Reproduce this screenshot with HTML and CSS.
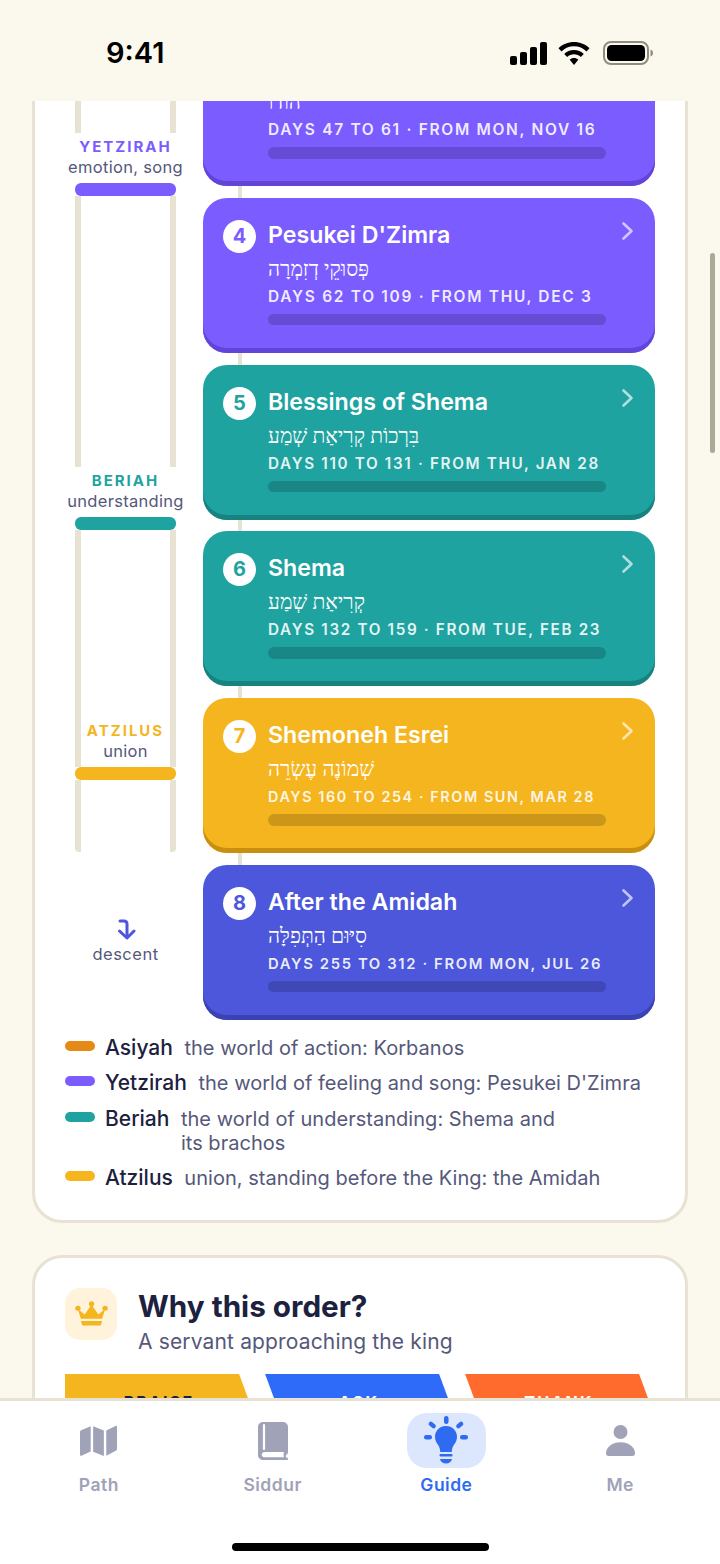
FILE: index.html
```html
<!DOCTYPE html>
<html lang="en">
<head>
  <meta charset="UTF-8">
  <meta name="viewport" content="width=device-width, initial-scale=1.0">
  <title>Guide</title>
  <link rel="stylesheet" href="styles.css">
</head>
<body>
  <div class="phone">
    <div class="status-bar">
      <span class="time">9:41</span>
      <div class="status-icons">
        <svg width="37" height="23" viewBox="0 0 37 23"><rect x="0" y="14" width="7" height="9" rx="2"/><rect x="10" y="10" width="7" height="13" rx="2"/><rect x="20" y="5" width="7" height="18" rx="2"/><rect x="30" y="0" width="7" height="23" rx="2"/></svg>
        <svg width="32" height="23" viewBox="0 0 32 23"><path d="M16 0c6 0 11.500 2.300 15.500 6.200l-3 3.200C25.200 6.200 20.800 4.300 16 4.300S6.800 6.200 3.500 9.400l-3-3.200C4.500 2.300 10 0 16 0z"/><path d="M16 8c3.800 0 7.300 1.500 9.800 3.900l-3 3.200C21 13.300 18.600 12.300 16 12.300s-5 1-6.800 2.800l-3-3.200C8.700 9.500 12.200 8 16 8z"/><path d="M16 16c1.700 0 3.200.6 4.300 1.700L16 23l-4.300-5.300c1.100-1.100 2.600-1.700 4.300-1.700z"/></svg>
        <svg class="battery" width="50" height="24" viewBox="0 0 50 24"><rect x="1" y="1" width="44" height="22" rx="7" fill="none" stroke="#8f8c80" stroke-width="2"/><rect x="4" y="4" width="38" height="16" rx="4.500"/><path d="M47.500 8.500c1.500.5 2.500 1.800 2.500 3.500s-1 3-2.500 3.500z" fill="#8f8c80"/></svg>
      </div>
    </div>

    <main class="scroll-area">
      <section class="panel timeline-panel">
        <div class="timeline">
          <div class="worlds">
            <div class="rails rails-a"></div>
            <div class="world-label">
              <strong class="text-purple">YETZIRAH</strong>
              <span>emotion, song</span>
            </div>
            <div class="world-bar bg-purple"></div>
            <div class="rails rails-b"></div>
            <div class="world-label">
              <strong class="text-teal">BERIAH</strong>
              <span>understanding</span>
            </div>
            <div class="world-bar bg-teal"></div>
            <div class="rails rails-c">
              <div class="world-label">
                <strong class="text-yellow">ATZILUS</strong>
                <span>union</span>
              </div>
            </div>
            <div class="world-bar bg-yellow"></div>
            <div class="rails rails-d"></div>
            <div class="descent">
              <svg width="20" height="21" viewBox="0 0 20 21" fill="none" stroke="#4c57db" stroke-width="3" stroke-linecap="round" stroke-linejoin="round"><path d="M4 2h4c2 0 3 1.200 3 3v13"/><path d="M3.500 12l7.500 7 7-7"/></svg>
              <span>descent</span>
            </div>
          </div>

          <div class="steps">
            <article class="step purple">
              <span class="step-num"></span>
              <div class="step-body cut-off">
                <p class="hebrew" dir="rtl">הודו</p>
                <p class="days">DAYS 47 TO 61 · FROM MON, NOV 16</p>
                <div class="progress"></div>
              </div>
            </article>
            <div class="connector"></div>
            <article class="step purple">
              <span class="step-num">4</span>
              <div class="step-body">
                <h3>Pesukei D'Zimra</h3>
                <p class="hebrew" dir="rtl">פְּסוּקֵי דְזִמְרָה</p>
                <p class="days">DAYS 62 TO 109 · FROM THU, DEC 3</p>
                <div class="progress"></div>
              </div>
              <svg class="chevron" width="14" height="20" viewBox="0 0 14 20"><path d="M2.500 2.500l8 7.500-8 7.500"/></svg>
            </article>
            <div class="connector"></div>
            <article class="step teal">
              <span class="step-num">5</span>
              <div class="step-body">
                <h3>Blessings of Shema</h3>
                <p class="hebrew" dir="rtl">בִּרְכוֹת קְרִיאַת שְׁמַע</p>
                <p class="days fit-98">DAYS 110 TO 131 · FROM THU, JAN 28</p>
                <div class="progress"></div>
              </div>
              <svg class="chevron" width="14" height="20" viewBox="0 0 14 20"><path d="M2.500 2.500l8 7.500-8 7.500"/></svg>
            </article>
            <div class="connector"></div>
            <article class="step teal">
              <span class="step-num">6</span>
              <div class="step-body">
                <h3>Shema</h3>
                <p class="hebrew" dir="rtl">קְרִיאַת שְׁמַע</p>
                <p class="days fit-98">DAYS 132 TO 159 · FROM TUE, FEB 23</p>
                <div class="progress"></div>
              </div>
              <svg class="chevron" width="14" height="20" viewBox="0 0 14 20"><path d="M2.500 2.500l8 7.500-8 7.500"/></svg>
            </article>
            <div class="connector"></div>
            <article class="step yellow">
              <span class="step-num">7</span>
              <div class="step-body">
                <h3>Shemoneh Esrei</h3>
                <p class="hebrew" dir="rtl">שְׁמוֹנֶה עֶשְׂרֵה</p>
                <p class="days fit-93">DAYS 160 TO 254 · FROM SUN, MAR 28</p>
                <div class="progress"></div>
              </div>
              <svg class="chevron" width="14" height="20" viewBox="0 0 14 20"><path d="M2.500 2.500l8 7.500-8 7.500"/></svg>
            </article>
            <div class="connector"></div>
            <article class="step indigo">
              <span class="step-num">8</span>
              <div class="step-body">
                <h3>After the Amidah</h3>
                <p class="hebrew" dir="rtl">סִיּוּם הַתְּפִלָּה</p>
                <p class="days fit-96">DAYS 255 TO 312 · FROM MON, JUL 26</p>
                <div class="progress"></div>
              </div>
              <svg class="chevron" width="14" height="20" viewBox="0 0 14 20"><path d="M2.500 2.500l8 7.500-8 7.500"/></svg>
            </article>
          </div>
        </div>

        <ul class="legend">
          <li><i class="swatch bg-orange"></i><b>Asiyah</b><span>the world of action: Korbanos</span></li>
          <li><i class="swatch bg-purple"></i><b>Yetzirah</b><span>the world of feeling and song: Pesukei D'Zimra</span></li>
          <li><i class="swatch bg-teal"></i><b>Beriah</b><span class="narrow">the world of understanding: Shema and its brachos</span></li>
          <li><i class="swatch bg-yellow"></i><b>Atzilus</b><span>union, standing before the King: the Amidah</span></li>
        </ul>
      </section>

      <section class="panel why-panel">
        <div class="why-head">
          <div class="why-icon">
            <svg width="33" height="25" viewBox="0 0 34 28" preserveAspectRatio="none" fill="#f5b51f"><circle cx="3" cy="8" r="2.800"/><circle cx="17" cy="3" r="2.800"/><circle cx="31" cy="8" r="2.800"/><path d="M3 9l7 6 7-11 7 11 7-6-3 11H6z"/><path d="M6 22.500h22l-1.500 5h-19z"/></svg>
          </div>
          <div>
            <h2>Why this order?</h2>
            <p>A servant approaching the king</p>
          </div>
        </div>
        <div class="order">
          <div class="order-step first">PRAISE</div>
          <div class="order-step ask">ASK</div>
          <div class="order-step thank">THANK</div>
        </div>
      </section>
    </main>

    <div class="scroll-thumb"></div>

    <nav class="tabs">
      <div class="tab">
        <div class="tab-icon">
          <svg width="37" height="34" viewBox="0 0 38 36" preserveAspectRatio="none" fill="#a0a2b8"><path d="M0 8.500c0-.8.500-1.500 1.200-1.800L11 2.500V29l-9.500 4.500C.7 33.800 0 33.300 0 32.500z"/><path d="M13.500 2.500L24.500 7v27l-11-4.500z"/><path d="M27 7l9.500-5c.8-.4 1.500.2 1.500 1v23.500c0 .8-.4 1.500-1.200 1.800L27 33.500z"/></svg>
        </div>
        <span>Path</span>
      </div>
      <div class="tab">
        <div class="tab-icon">
          <svg width="30" height="38" viewBox="0 0 30 38"><path d="M5 0h20c2.800 0 5 2.200 5 5v25c0 1.500-.8 2.400-1.800 2.800-.6.800-.6 1.800 0 2.500.8.300 1.800.8 1.800 1.500v.2c0 .6-.4 1-1 1H5c-2.800 0-5-2.200-5-5V5c0-2.800 2.200-5 5-5z" fill="#a0a2b8"/><path d="M6 3v24" stroke="#fff" stroke-width="2.200" stroke-linecap="round"/><path d="M6.500 30h19.500c-.6 1.700-.6 3.500 0 5.300H6.500C5 35.300 3.700 34.200 3.700 32.700S5 30 6.500 30z" fill="#fff"/></svg>
        </div>
        <span>Siddur</span>
      </div>
      <div class="tab active">
        <div class="tab-icon">
          <svg width="44" height="49" viewBox="0 0 44 49" fill="#2e6bf0"><rect x="20" y="0" width="4.500" height="8" rx="2.250"/><rect x="6" y="5" width="4.500" height="8" rx="2.250" transform="rotate(-50 8.250 9)"/><rect x="33.500" y="5" width="4.500" height="8" rx="2.250" transform="rotate(50 35.750 9)"/><rect x="0" y="19" width="8" height="4.500" rx="2.250"/><rect x="36" y="19" width="8" height="4.500" rx="2.250"/><path d="M22 10c6.200 0 11 4.700 11 10.800 0 3.400-1.300 5.600-3 8-1.300 1.800-2 4-2.300 7.200H16.300c-.3-3.200-1-5.400-2.300-7.200-1.700-2.400-3-4.600-3-8C11 14.700 15.800 10 22 10z"/><rect x="15.500" y="38" width="13" height="2.500" rx="1"/><path d="M16 43h12c-.5 2.800-3 4.500-6 4.500s-5.500-1.700-6-4.500z"/></svg>
        </div>
        <span>Guide</span>
      </div>
      <div class="tab">
        <div class="tab-icon">
          <svg width="29" height="31" viewBox="0 0 29 31" fill="#a0a2b8"><circle cx="14.500" cy="7" r="7"/><path d="M14.500 17.300C6.500 17.300 0 22 0 28.500 0 30 1 31 2.500 31h24c1.500 0 2.500-1 2.500-2.500 0-6.500-6.500-11.200-14.500-11.200z"/></svg>
        </div>
        <span>Me</span>
      </div>
      <div class="home-indicator"></div>
    </nav>
  </div>
</body>
</html>
```
FILE: styles.css
```css
* {
  box-sizing: border-box;
}

body {
  margin: 0;
  background-color: #fbf8ee;
  font-family: 'Inter', sans-serif;
  color: #1c2140;
}

h2, h3, p, ul {
  margin: 0;
  padding: 0;
}

.phone {
  position: relative;
  width: 720px;
  height: 1564px;
  display: flex;
  flex-direction: column;
  overflow: hidden;
}

/* status bar */
.status-bar {
  height: 101px;
  flex: none;
  display: flex;
  justify-content: space-between;
  padding: 36px 67px 0 106px;
}

.time {
  font-size: 29px;
  line-height: 34px;
  font-weight: 600;
  color: #000;
}

.status-icons {
  display: flex;
  gap: 11px;
  height: 24px;
  margin-top: 5px;
  align-items: center;
}

.battery {
  margin-left: 2px;
}

/* scrolling content */
.scroll-area {
  flex: 1;
  min-height: 0;
  overflow: hidden;
  padding: 0 32px;
}

.panel {
  background-color: #fff;
  border: 3px solid #e8e2d2;
  border-radius: 30px;
}

.timeline-panel {
  margin-top: -100px;
  padding: 27px 30px 30px;
}

.timeline {
  display: flex;
  gap: 17px;
}

.worlds {
  width: 121px;
  flex: none;
  display: flex;
  flex-direction: column;
  align-items: center;
}

.rails {
  width: 101px;
  flex: none;
  border-left: 6px solid #e8e2d2;
  border-right: 6px solid #e8e2d2;
}

.rails-a { height: 102px; }
.rails-b { height: 271px; }
.rails-d { height: 72px; border-radius: 0 0 4px 4px; }

/* this one runs on beside its label, the label fits between the rails */
.rails-c {
  height: 237px;
  display: flex;
  flex-direction: column;
  justify-content: flex-end;
}

.world-label {
  height: 50px;
  flex: none;
  padding-top: 5px;
  display: flex;
  flex-direction: column;
  align-items: center;
  white-space: nowrap;
}

.world-label strong {
  font-size: 15px;
  line-height: 18px;
  font-weight: 700;
  letter-spacing: 2px;
}

.world-label span {
  font-size: 16.500px;
  line-height: 22px;
  letter-spacing: 0.300px;
  color: #55587a;
}

.world-bar {
  width: 101px;
  height: 13px;
  flex: none;
  border-radius: 6px;
}

.descent {
  margin-top: 67px;
  display: flex;
  flex-direction: column;
  align-items: center;
  gap: 3px;
  font-size: 16.500px;
  line-height: 22px;
  letter-spacing: 0.500px;
  color: #55587a;
}

.text-purple { color: #7b5cff; }
.text-teal { color: #1fa3a0; }
.text-yellow { color: #f5b51f; }

.bg-purple { background-color: #7b5cff; }
.bg-teal { background-color: #1fa3a0; }
.bg-yellow { background-color: #f5b51f; }
.bg-orange { background-color: #e68a17; }

/* step cards */
.steps {
  flex: 1;
  min-width: 0;
}

.connector {
  width: 4px;
  height: 11.800px;
  margin-left: 34.500px;
  background-color: #e8e2d2;
}

.step {
  height: 155px;
  padding: 18px 20px 0;
  border-radius: 24px;
  display: flex;
  color: #fff;
  box-shadow: inset 0 -5px 0 var(--edge);
  background-color: var(--fill);
}

.purple { --fill: #7b5cff; --edge: #6244d8; }
.teal { --fill: #1fa3a0; --edge: #178280; }
.yellow { --fill: #f5b51f; --edge: #c98f10; }
.indigo { --fill: #4c57db; --edge: #3a43b2; }

.step-num {
  width: 33px;
  height: 33px;
  margin-top: 4px;
  flex: none;
  border-radius: 50%;
  background-color: #fff;
  color: var(--fill);
  font-size: 20px;
  line-height: 33px;
  font-weight: 700;
  text-align: center;
}

.step-body {
  flex: 1;
  min-width: 0;
  margin: 0 15px 0 12px;
}

/* the top of this card is scrolled out of view */
.cut-off {
  padding-top: 37px;
  margin-right: 29px;
}

.step h3 {
  margin-top: 1px;
  font-size: 23.200px;
  line-height: 36px;
  font-weight: 600;
}

.hebrew {
  margin-top: 4px;
  font-family: 'Liberation Serif', serif;
  font-size: 21px;
  line-height: 24px;
  direction: ltr;
  unicode-bidi: plaintext;
  text-align: left;
}

.days {
  margin-top: 6px;
  font-size: 15.500px;
  line-height: 20px;
  font-weight: 600;
  letter-spacing: 1.690px;
  white-space: nowrap;
  color: rgba(255, 255, 255, 0.9);
}

/* long date lines shrink to stay inside the card */
.days.fit-98 {
  font-size: 15.250px;
  letter-spacing: 1.660px;
}

.days.fit-96 {
  font-size: 14.830px;
  letter-spacing: 1.620px;
}

.days.fit-93 {
  font-size: 14.400px;
  letter-spacing: 1.570px;
}

.progress {
  height: 11.500px;
  margin-top: 7px;
  border-radius: 6px;
  background-color: rgba(0, 0, 0, 0.17);
}

.chevron {
  flex: none;
  margin-top: 5px;
  fill: none;
  stroke: rgba(255, 255, 255, 0.65);
  stroke-width: 2.600;
  stroke-linecap: round;
  stroke-linejoin: round;
}

/* legend */
.legend {
  list-style: none;
  margin-top: 16px;
  display: flex;
  flex-direction: column;
  gap: 11.400px;
}

.legend li {
  display: flex;
  align-items: flex-start;
  font-size: 20px;
  line-height: 24px;
}

.swatch {
  width: 30px;
  height: 10px;
  margin: 5px 10px 0 0;
  flex: none;
  border-radius: 5px;
}

.legend b {
  font-size: 21px;
  font-weight: 500;
  margin-right: 11.500px;
  flex: none;
}

.legend span {
  color: #55587a;
  letter-spacing: 0.030px;
}

.legend .narrow {
  width: 390px;
}

/* why this order */
.why-panel {
  margin-top: 31.500px;
  padding: 30px 30px 40px;
}

.why-head {
  display: flex;
  gap: 21px;
}

.why-icon {
  width: 52px;
  height: 52px;
  flex: none;
  border-radius: 15px;
  background-color: #fff3dc;
  display: flex;
  align-items: center;
  justify-content: center;
}

.why-head h2 {
  font-size: 29.700px;
  line-height: 36px;
  font-weight: 700;
  margin-bottom: 2px;
}

.why-head p {
  font-size: 21px;
  line-height: 32px;
  letter-spacing: 0.150px;
  color: #55587a;
}

.order {
  display: flex;
  gap: 4px;
  margin-top: 16px;
}

.order-step {
  width: 196px;
  height: 60px;
  flex: none;
  padding: 18px 8px 0 0;
  font-size: 16px;
  line-height: 20px;
  font-weight: 700;
  letter-spacing: 2.200px;
  text-align: center;
  color: #fff;
}

.first {
  background-color: #f5b51f;
  color: #1c2140;
  clip-path: polygon(0 0, 174px 0, 100% 100%, 0 100%);
}

.ask {
  background-color: #2e6bf9;
  clip-path: polygon(0 0, 174px 0, 100% 100%, 22px 100%);
}

.thank {
  background-color: #ff6b2c;
  clip-path: polygon(0 0, 174px 0, 100% 100%, 22px 100%);
}

.scroll-thumb {
  position: absolute;
  left: 710px;
  top: 253px;
  width: 5px;
  height: 200px;
  border-radius: 3px;
  background-color: rgba(90, 90, 70, 0.5);
}

/* tab bar */
.tabs {
  position: relative;
  height: 166px;
  flex: none;
  padding: 12px 13px 0 12px;
  display: grid;
  grid-template-columns: repeat(4, 1fr);
  background-color: #fff;
  border-top: 3px solid #e8e2d2;
}

.tab {
  display: flex;
  flex-direction: column;
  align-items: center;
  font-size: 17.500px;
  line-height: 22px;
  font-weight: 600;
  letter-spacing: 0.500px;
  color: #a0a2b8;
}

.tab-icon {
  width: 79px;
  height: 55px;
  margin-bottom: 6px;
  border-radius: 20px;
  display: flex;
  align-items: center;
  justify-content: center;
}

.tab.active {
  color: #2e6bf0;
}

.tab.active .tab-icon {
  background-color: #dce6fd;
}

.home-indicator {
  position: absolute;
  left: 232px;
  bottom: 13px;
  width: 257px;
  height: 8px;
  border-radius: 4px;
  background-color: #000;
}
```
